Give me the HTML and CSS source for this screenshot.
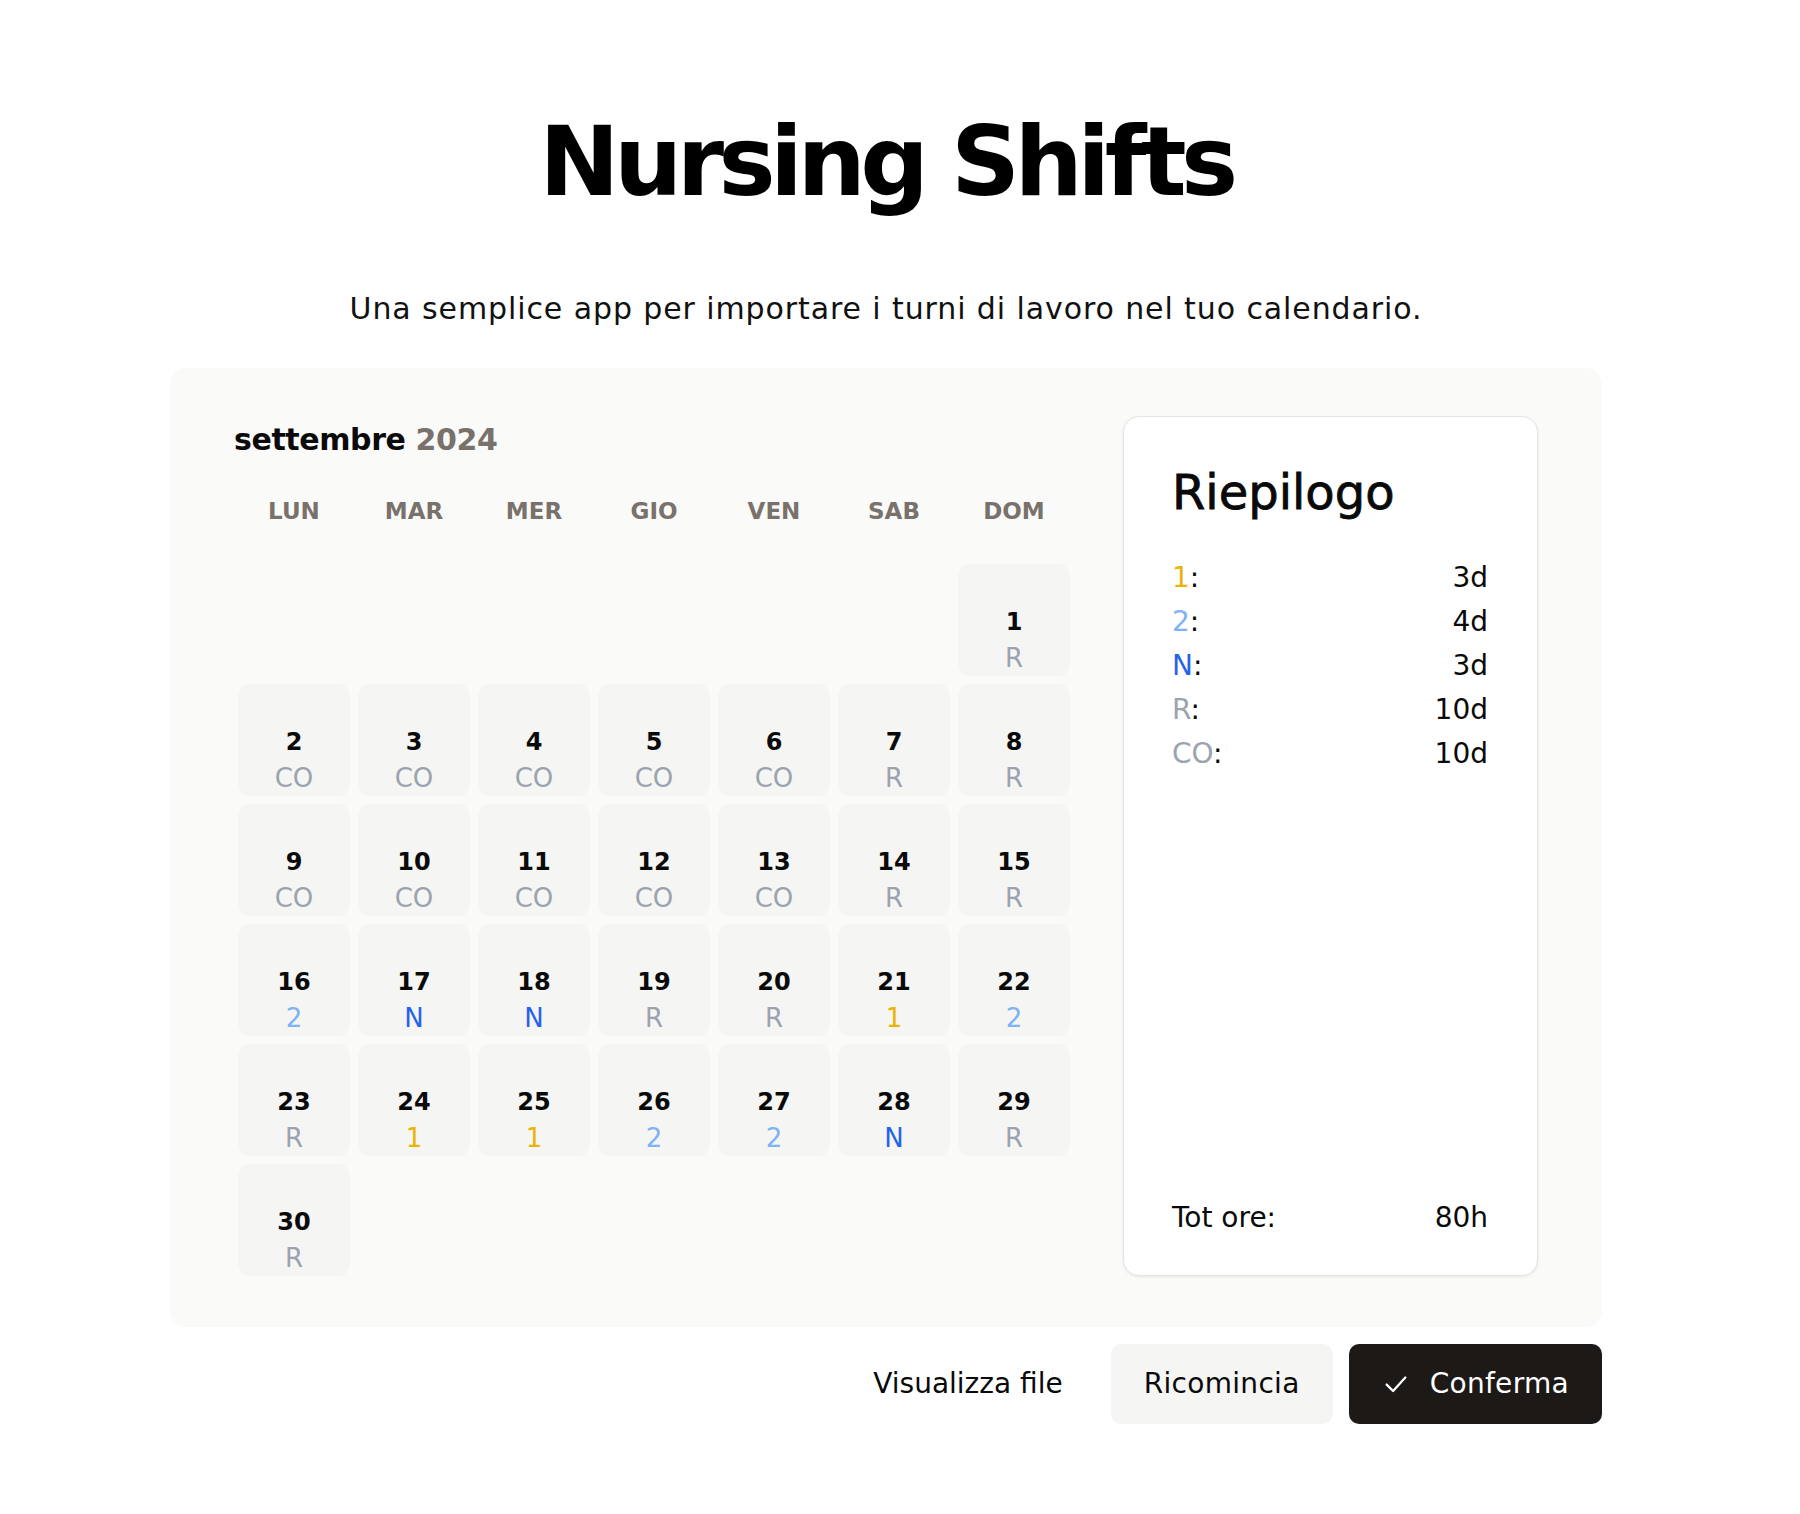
FILE: index.html
```html
<!DOCTYPE html>
<html lang="it">
<head>
<meta charset="utf-8">
<title>Nursing Shifts</title>
<link rel="stylesheet" href="styles.css">
</head>
<body>
<div class="page">
  <h1 class="title">Nursing Shifts</h1>
  <p class="subtitle">Una semplice app per importare i turni di lavoro nel tuo calendario.</p>

  <section class="panel">
    <div class="calendar">
      <h2 class="month">settembre <span class="year">2024</span></h2>
      <div class="weekdays">
        <div>LUN</div><div>MAR</div><div>MER</div><div>GIO</div><div>VEN</div><div>SAB</div><div>DOM</div>
      </div>
      <div class="days">
        <div class="day empty"></div><div class="day empty"></div><div class="day empty"></div>
        <div class="day empty"></div><div class="day empty"></div><div class="day empty"></div>
        <div class="day"><span class="num">1</span><span class="code c-r">R</span></div>

        <div class="day"><span class="num">2</span><span class="code c-r">CO</span></div>
        <div class="day"><span class="num">3</span><span class="code c-r">CO</span></div>
        <div class="day"><span class="num">4</span><span class="code c-r">CO</span></div>
        <div class="day"><span class="num">5</span><span class="code c-r">CO</span></div>
        <div class="day"><span class="num">6</span><span class="code c-r">CO</span></div>
        <div class="day"><span class="num">7</span><span class="code c-r">R</span></div>
        <div class="day"><span class="num">8</span><span class="code c-r">R</span></div>

        <div class="day"><span class="num">9</span><span class="code c-r">CO</span></div>
        <div class="day"><span class="num">10</span><span class="code c-r">CO</span></div>
        <div class="day"><span class="num">11</span><span class="code c-r">CO</span></div>
        <div class="day"><span class="num">12</span><span class="code c-r">CO</span></div>
        <div class="day"><span class="num">13</span><span class="code c-r">CO</span></div>
        <div class="day"><span class="num">14</span><span class="code c-r">R</span></div>
        <div class="day"><span class="num">15</span><span class="code c-r">R</span></div>

        <div class="day"><span class="num">16</span><span class="code c-2">2</span></div>
        <div class="day"><span class="num">17</span><span class="code c-n">N</span></div>
        <div class="day"><span class="num">18</span><span class="code c-n">N</span></div>
        <div class="day"><span class="num">19</span><span class="code c-r">R</span></div>
        <div class="day"><span class="num">20</span><span class="code c-r">R</span></div>
        <div class="day"><span class="num">21</span><span class="code c-1">1</span></div>
        <div class="day"><span class="num">22</span><span class="code c-2">2</span></div>

        <div class="day"><span class="num">23</span><span class="code c-r">R</span></div>
        <div class="day"><span class="num">24</span><span class="code c-1">1</span></div>
        <div class="day"><span class="num">25</span><span class="code c-1">1</span></div>
        <div class="day"><span class="num">26</span><span class="code c-2">2</span></div>
        <div class="day"><span class="num">27</span><span class="code c-2">2</span></div>
        <div class="day"><span class="num">28</span><span class="code c-n">N</span></div>
        <div class="day"><span class="num">29</span><span class="code c-r">R</span></div>

        <div class="day"><span class="num">30</span><span class="code c-r">R</span></div>
      </div>
    </div>

    <aside class="summary">
      <h3 class="summary-title">Riepilogo</h3>
      <ul class="stats">
        <li><span><span class="c-1">1</span>:</span><span>3d</span></li>
        <li><span><span class="c-2">2</span>:</span><span>4d</span></li>
        <li><span><span class="c-n">N</span>:</span><span>3d</span></li>
        <li><span><span class="c-r">R</span>:</span><span>10d</span></li>
        <li><span><span class="c-r">CO</span>:</span><span>10d</span></li>
      </ul>
      <div class="total"><span>Tot ore:</span><span>80h</span></div>
    </aside>
  </section>

  <div class="actions">
    <button class="btn btn-ghost">Visualizza file</button>
    <button class="btn btn-light">Ricomincia</button>
    <button class="btn btn-dark">
      <svg class="check" viewBox="0 0 24 24" width="28" height="28" fill="none" stroke="currentColor" stroke-width="2" stroke-linecap="round" stroke-linejoin="round"><polyline points="4 12.5 9.5 18 20 6.5"/></svg>
      Conferma
    </button>
  </div>
</div>
</body>
</html>
```

FILE: styles.css
```css
* { box-sizing: border-box; }

html, body {
  margin: 0;
  padding: 0;
  background: #ffffff;
}

body {
  font-family: "DejaVu Sans", "Liberation Sans", sans-serif;
  color: #0a0a0a;
}

.page {
  width: 1432px;
  margin-left: 170px;
  padding-top: 114px;
}

.title {
  margin: 0;
  text-align: center;
  font-size: 96px;
  line-height: 96px;
  font-weight: 700;
  letter-spacing: -5.6px;
  color: #000;
}

.subtitle {
  margin: 79px 0 0;
  text-align: center;
  font-size: 30px;
  line-height: 40px;
  letter-spacing: 0.9px;
  color: #111;
}

.panel {
  margin-top: 39px;
  background: #fafaf9;
  border-radius: 16px;
  padding: 48px 64px 51px 64px;
  display: flex;
  gap: 53px;
}

.calendar {
  width: 836px;
  flex: none;
}

.month {
  margin: 0;
  font-size: 30px;
  line-height: 48px;
  font-weight: 700;
  letter-spacing: -0.4px;
  color: #0a0a0a;
}

.year {
  color: #78716c;
}

.weekdays {
  margin-top: 31px;
  margin-left: 4px;
  display: grid;
  grid-template-columns: repeat(7, 112px);
  column-gap: 8px;
  font-size: 23px;
  line-height: 32px;
  font-weight: 700;
  color: #78716c;
  text-align: center;
}

.days {
  margin-top: 37px;
  margin-left: 4px;
  display: grid;
  grid-template-columns: repeat(7, 112px);
  grid-auto-rows: 112px;
  gap: 8px;
}

.day {
  background: #f5f5f4;
  border-radius: 12px;
  display: flex;
  flex-direction: column;
  justify-content: flex-end;
  align-items: center;
}

.day.empty {
  background: transparent;
}

.num {
  font-size: 24px;
  line-height: 36px;
  font-weight: 700;
  color: #0a0a0a;
}

.code {
  font-size: 26px;
  line-height: 36px;
}

.c-r { color: #9ca3af; }
.c-1 { color: #eab308; }
.c-2 { color: #7fb2f6; }
.c-n { color: #2563eb; }

.summary {
  flex: 1;
  background: #ffffff;
  border: 1px solid #e7e5e4;
  border-radius: 16px;
  box-shadow: 0 1px 3px rgba(0, 0, 0, 0.08);
  padding: 47px 49px 35px 48px;
  display: flex;
  flex-direction: column;
}

.summary-title {
  margin: 0;
  font-size: 48px;
  line-height: 56px;
  font-weight: 400;
  -webkit-text-stroke: 0.8px #0a0a0a;
  color: #0a0a0a;
}

.stats {
  list-style: none;
  margin: 36px 0 0;
  padding: 0;
}

.stats li,
.total {
  display: flex;
  justify-content: space-between;
  font-size: 28px;
  line-height: 44px;
  color: #0a0a0a;
}

.total {
  margin-top: auto;
}

.actions {
  margin-top: 17px;
  display: flex;
  justify-content: flex-end;
  gap: 16px;
}

.btn {
  font-family: inherit;
  font-size: 28px;
  line-height: 40px;
  letter-spacing: 0.3px;
  padding: 20px 33px;
  border: none;
  border-radius: 10px;
  display: flex;
  align-items: center;
  gap: 20px;
  color: #0a0a0a;
  cursor: pointer;
}

.btn-ghost {
  background: transparent;
  letter-spacing: 0;
  padding-right: 32px;
}

.btn-light {
  background: #f5f5f4;
}

.btn-dark {
  background: #1c1917;
  color: #ffffff;
}

.check {
  display: block;
  flex: none;
}
```
